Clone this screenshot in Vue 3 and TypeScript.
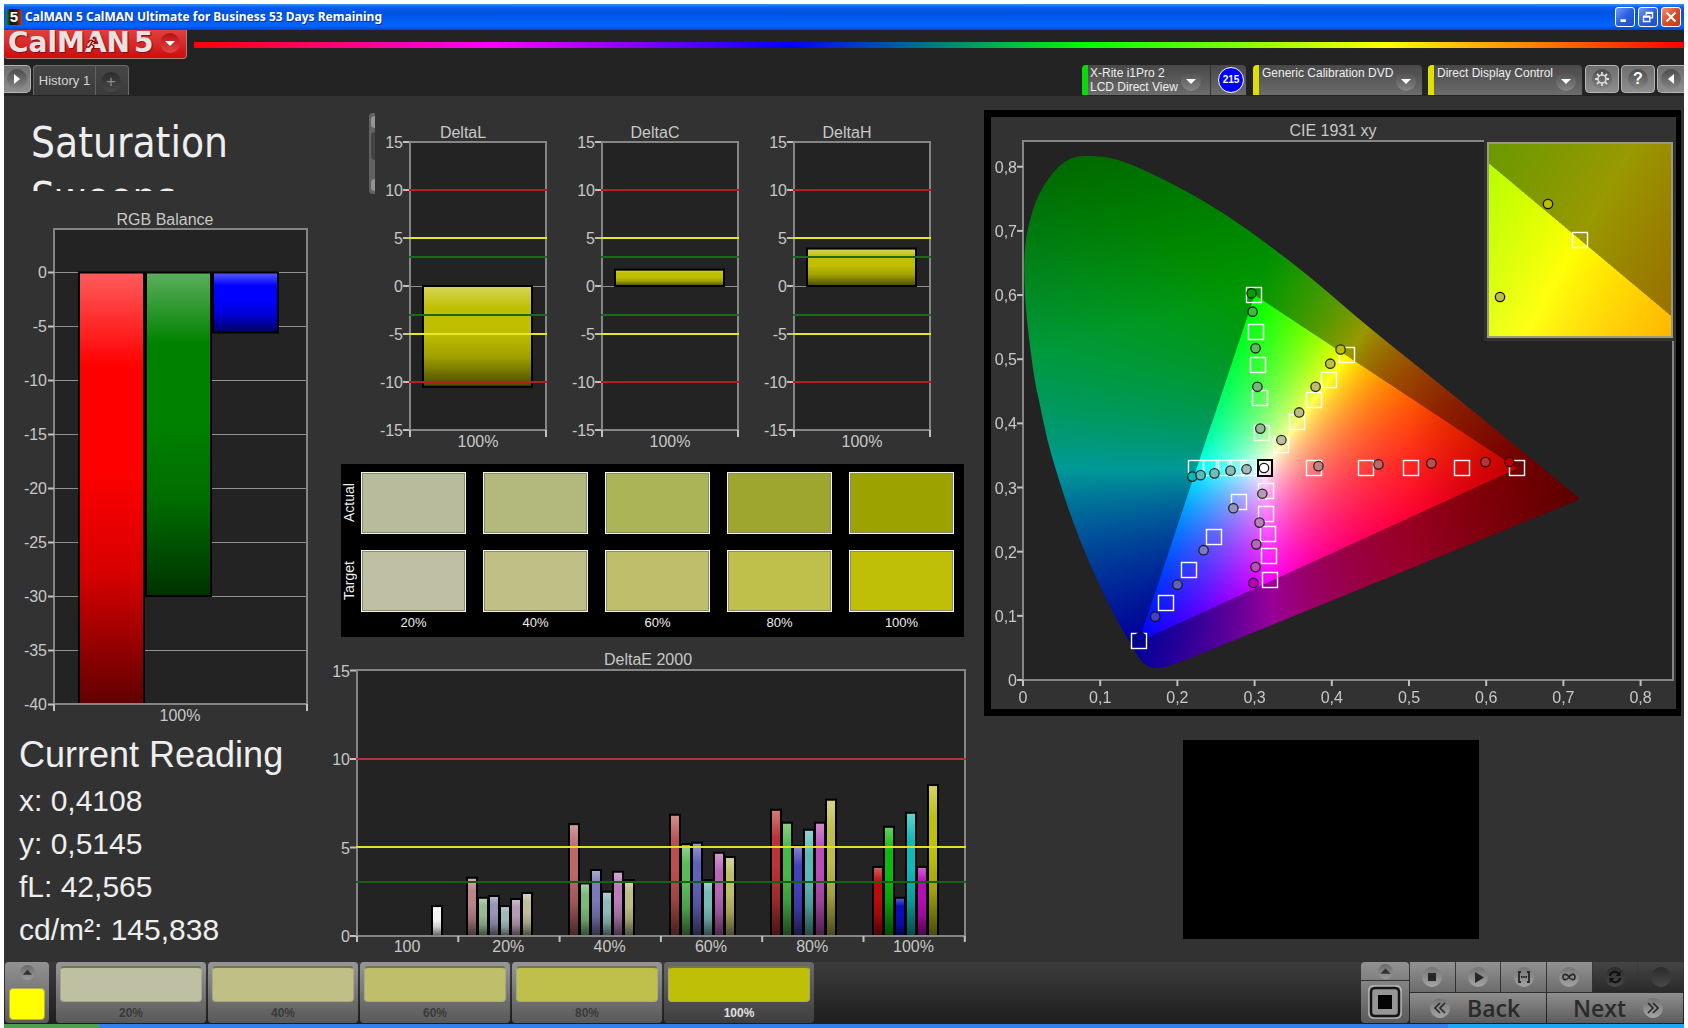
<script setup lang="ts">
import { onMounted, ref } from 'vue'

type Point = [number, number]
interface Bar { x: number; w: number; from: number; to: number; color: string }

/* ---------- RGB balance ---------- */
const rgbY = (v: number) => 67 - v * 10.8
const rgbTicks = [0, -5, -10, -15, -20, -25, -30, -35, -40]
const rgbBars: Bar[] = [
  { x: 75, w: 65, from: 0, to: -40, color: '#ff0000' },
  { x: 142, w: 65, from: 0, to: -30, color: '#008200' },
  { x: 209, w: 65, from: 0, to: -5.6, color: '#0000ff' },
]

/* ---------- Delta L / C / H ---------- */
const deltaY = (v: number) => 174 - v * 9.6
const deltaTicks = [15, 10, 5, 0, -5, -10, -15]
const deltaCharts = [
  { name: 'DeltaL', value: -10.5 },
  { name: 'DeltaC', value: 1.7 },
  { name: 'DeltaH', value: 3.9 },
]
const limits = [
  { v: 10, color: '#b42020' },
  { v: 5, color: '#e6e62a' },
  { v: 3, color: '#1c691c' },
  { v: -3, color: '#1c691c' },
  { v: -5, color: '#e6e62a' },
  { v: -10, color: '#b42020' },
]

/* ---------- Swatches ---------- */
const levels = ['20%', '40%', '60%', '80%', '100%']
const actual = ['#b8bb9c', '#b3b97c', '#abb558', '#9fa62e', '#9ca300']
const target = ['#bfbfa4', '#c0bf86', '#bfbf6b', '#bfbf4c', '#bfbf07']

/* ---------- DeltaE 2000 ---------- */
const eY = (v: number) => 286 - v * 17.7
const eTicks = [15, 10, 5, 0]
const eGroups: { label: string; values: number[]; colors: string[] }[] = [
  { label: '100', values: [0, 0, 0, 0, 0, 0, 1.69], colors: ['', '', '', '', '', '', '#f4f4f4'] },
  { label: '20%', values: [3.29, 2.16, 2.26, 1.69, 2.09, 2.43], colors: ['#b98686', '#96b996', '#9696b9', '#a0b9b9', '#b49bb4', '#bebe9c'] },
  { label: '40%', values: [6.32, 2.97, 3.73, 2.5, 3.63, 3.16], colors: ['#ba6868', '#7ab97a', '#7a7ab9', '#8cbaba', '#b97eb9', '#bebe84'] },
  { label: '60%', values: [6.85, 5.19, 5.27, 3.16, 4.7, 4.46], colors: ['#b95050', '#5cb95c', '#6060b9', '#78baba', '#b966b9', '#bebe69'] },
  { label: '80%', values: [7.13, 6.4, 5.08, 6, 6.4, 7.7], colors: ['#b93434', '#46b946', '#4242b9', '#5ababa', '#b94eb9', '#bebe4b'] },
  { label: '100%', values: [3.9, 6.17, 2.16, 6.96, 3.9, 8.53], colors: ['#b90c0c', '#0cb90c', '#0c0cb9', '#0cbaba', '#b90cb9', '#bebe0c'] },
]
const groupX = (i: number) => 27 + i * 101.3
const eBars: Bar[] = eGroups.flatMap((g, gi) =>
  g.values
    .map((v, i) => ({ x: Math.round(groupX(gi) + 9 + i * 11), w: 10, from: v, to: 0, color: g.colors[i] }))
    .filter((b) => b.from > 0),
)

/* ---------- CIE 1931 ---------- */
const PLOT_W = 650
const PLOT_H = 539
const cx = (x: number) => x * 772
const cy = (y: number) => PLOT_H - y * 641.6
const xTicks = [0, 0.1, 0.2, 0.3, 0.4, 0.5, 0.6, 0.7, 0.8]
const yTicks = xTicks
const comma = (v: number) => String(v).replace('.', ',')

const locus: Point[] = [
  [63, 15], [54, 15], [42, 20], [31, 30], [21, 44], [13, 59], [6, 82], [2, 102], [1, 126], [2, 159],
  [6, 199], [12, 242], [16, 259], [24, 299], [35, 336], [49, 379], [69, 429], [92, 476], [107, 502],
  [116, 517], [121, 523], [128, 527], [135, 527], [142, 526], [156, 522], [548, 362], [558, 358],
  [552, 354], [437, 259], [345, 186], [291, 139], [246, 104], [201, 72], [156, 46], [115, 26], [93, 18], [75, 15],
]

const targets: Point[] = [
  [0.299, 0.6], [0.302, 0.542], [0.3045, 0.491], [0.3074, 0.4395], [0.3097, 0.385],
  [0.42, 0.5066], [0.3964, 0.468], [0.377, 0.436], [0.3554, 0.4025], [0.3342, 0.3666],
  [0.6398, 0.331], [0.5687, 0.331], [0.5032, 0.331], [0.4439, 0.331], [0.377, 0.331],
  [0.224, 0.331], [0.2429, 0.331], [0.2598, 0.331], [0.2768, 0.331], [0.2932, 0.331],
  [0.15, 0.0606], [0.185, 0.1196], [0.2155, 0.1712], [0.247, 0.2227], [0.2796, 0.2775],
  [0.32, 0.1556], [0.3187, 0.1937], [0.3168, 0.2275], [0.3149, 0.258], [0.3149, 0.2946],
]
const readings: [number, number, string][] = [
  [0.296, 0.6027, '#00a000'], [0.2974, 0.574, '#41b941'], [0.3012, 0.517, '#5fb95f'], [0.3036, 0.457, '#78b978'], [0.3074, 0.3918, '#96b996'],
  [0.4114, 0.515, '#bebe00'], [0.398, 0.493, '#bebe4b'], [0.379, 0.457, '#bebe69'], [0.3577, 0.417, '#bebe84'], [0.3347, 0.374, '#bebe9c'],
  [0.63, 0.3397, '#b90000'], [0.599, 0.3397, '#b93434'], [0.529, 0.3376, '#b95050'], [0.4604, 0.336, '#ba6868'], [0.3827, 0.3333, '#b98686'],
  [0.2193, 0.317, '#00baba'], [0.23, 0.3193, '#5ababa'], [0.248, 0.322, '#78baba'], [0.2688, 0.3263, '#8cbaba'], [0.2895, 0.3285, '#a0b9b9'],
  [0.152, 0.067, '#0000b0'], [0.1713, 0.0987, '#4242b9'], [0.2, 0.1486, '#6060b9'], [0.2339, 0.2023, '#7a7ab9'], [0.2725, 0.2678, '#9696b9'],
  [0.2984, 0.1513, '#b900b9'], [0.3012, 0.176, '#b94eb9'], [0.3022, 0.2114, '#b966b9'], [0.3064, 0.2453, '#b97eb9'], [0.31, 0.2903, '#b49bb4'],
]

/** Display colour of a chromaticity; dimmed where it falls outside Rec. 709. */
function chroma(x: number, y: number): [number, number, number] {
  const Y = Math.max(y, 0.001)
  const X = x / Y
  const Z = (1 - x - Y) / Y
  const r = 3.2406 * X - 1.5372 - 0.4986 * Z
  const g = -0.9689 * X + 1.8758 + 0.0415 * Z
  const b = 0.0557 * X - 0.204 + 1.057 * Z
  const inside = r >= 0 && g >= 0 && b >= 0
  const green = Math.max(0, y - 0.6 + (0.3 - x) * 0.3) * 1.1
  const red = Math.max(0, x - 0.5) * 1.8
  const k = (255 * (inside ? 1 : 0.6) * (1 - green) * (1 - red)) / Math.max(r, g, b)
  return [Math.max(r, 0) * k, Math.max(g, 0) * k, Math.max(b, 0) * k]
}

function paint(canvas: HTMLCanvasElement, toXY: (px: number, py: number) => Point) {
  const ctx = canvas.getContext('2d')
  if (!ctx) return
  const image = ctx.createImageData(canvas.width, canvas.height)
  let p = 0
  for (let j = 0; j < canvas.height; j++) {
    for (let i = 0; i < canvas.width; i++) {
      const sum = [0, 0, 0]
      for (const [dx, dy] of [[0.25, 0.25], [0.75, 0.25], [0.25, 0.75], [0.75, 0.75]]) {
        const c = chroma(...toXY(i + dx, j + dy))
        sum[0] += c[0]
        sum[1] += c[1]
        sum[2] += c[2]
      }
      image.data[p++] = sum[0] / 4
      image.data[p++] = sum[1] / 4
      image.data[p++] = sum[2] / 4
      image.data[p++] = 255
    }
  }
  ctx.putImageData(image, 0, 0)
}

const gamut = ref<HTMLCanvasElement>()
const detail = ref<HTMLCanvasElement>()

onMounted(() => {
  if (gamut.value) {
    paint(gamut.value, (px, py) => [px / 772, (PLOT_H - py) / 641.6])
    const ctx = gamut.value.getContext('2d')
    if (ctx) {
      ctx.globalCompositeOperation = 'destination-in'
      ctx.beginPath()
      locus.forEach(([x, y], i) => {
        const [nx, ny] = locus[(i + 1) % locus.length]
        if (i === 0) ctx.moveTo((x + nx) / 2, (y + ny) / 2)
        else ctx.quadraticCurveTo(x, y, (x + nx) / 2, (y + ny) / 2)
      })
      ctx.closePath()
      ctx.fill()
    }
  }
  if (detail.value) {
    paint(detail.value, (px, py) => [0.4195 + (px - 92) / 3700, 0.5053 - (py - 96) / 3900])
  }
})

const currentReading = ['x: 0,4108', 'y: 0,5145', 'fL: 42,565', 'cd/m²: 145,838']
</script>

<template>
  <div class="app">
    <header>
      <div class="titlebar">
        <span class="app-icon">5</span>
        <h1>CalMAN 5 CalMAN Ultimate for Business 53 Days Remaining</h1>
        <button class="win" aria-label="Minimize"><svg viewBox="0 0 20 20"><path d="M5 14h6" stroke="#fff" stroke-width="3" /></svg></button>
        <button class="win" aria-label="Restore"><svg viewBox="0 0 20 20"><path d="M8 8V5h7v6h-3M8 6h7" stroke="#fff" stroke-width="1.5" fill="none" /><path d="M5 9h7v6H5zM5 10h7" stroke="#fff" stroke-width="1.5" fill="none" /></svg></button>
        <button class="win close" aria-label="Close"><svg viewBox="0 0 20 20"><path d="M5 5l10 10M15 5L5 15" stroke="#fff" stroke-width="2.2" /></svg></button>
      </div>

      <div class="brand-row">
        <button class="brand" aria-label="CalMAN 5 menu">
          <span class="brand-name">CalMAN</span><span class="brand-name">5</span>
          <svg class="runner" viewBox="0 0 12 14"><circle cx="8" cy="2" r="1.6" fill="#8c1010" /><path d="M7 4L5 8l3 2-1 4M5 8l-2 3H0M7 5l3 2 2-1M6 4L3 5 2 7" fill="none" stroke="#8c1010" stroke-width="1.4" /></svg>
          <span class="knob red"><svg viewBox="0 0 20 20"><path d="M5 8h10l-5 5z" fill="#fff" /></svg></span>
        </button>
        <div class="rainbow"></div>
      </div>

      <nav class="tabs">
        <button class="square first" aria-label="Expand"><span class="knob"><svg viewBox="0 0 20 20"><path d="M7 5v10l6-5z" fill="#fff" /></svg></span></button>
        <div class="history">
          <button class="tab">History 1</button>
          <button class="add" aria-label="Add history"><span class="knob dark">+</span></button>
        </div>
        <span class="spacer"></span>
        <div class="device meter">
          <button class="device-btn" aria-haspopup="menu"><span>X-Rite i1Pro 2<br>LCD Direct View</span><span class="knob"><svg viewBox="0 0 20 20"><path d="M5 8h10l-5 5z" fill="#fff" /></svg></span></button>
          <span class="count">215</span>
        </div>
        <div class="device source">
          <button class="device-btn" aria-haspopup="menu"><span>Generic Calibration DVD</span><span class="knob"><svg viewBox="0 0 20 20"><path d="M5 8h10l-5 5z" fill="#fff" /></svg></span></button>
        </div>
        <div class="device display">
          <button class="device-btn" aria-haspopup="menu"><span>Direct Display Control</span><span class="knob"><svg viewBox="0 0 20 20"><path d="M5 8h10l-5 5z" fill="#fff" /></svg></span></button>
        </div>
        <button class="square" aria-label="Settings"><span class="knob"><svg viewBox="0 0 20 20"><circle cx="10" cy="10" r="4" fill="none" stroke="#ddd" stroke-width="1.6" /><path d="M10 3v3M10 14v3M3 10h3M14 10h3M5 5l2 2M13 13l2 2M15 5l-2 2M7 13l-2 2" stroke="#ddd" stroke-width="1.8" /></svg></span></button>
        <button class="square" aria-label="Help"><span class="knob help">?</span></button>
        <button class="square last" aria-label="Collapse"><span class="knob"><svg viewBox="0 0 20 20"><path d="M13 5v10l-6-5z" fill="#fff" /></svg></span></button>
      </nav>
    </header>

    <main>
      <section class="left">
        <h2 class="page-title">Saturation Sweeps</h2>
        <svg class="chart" viewBox="0 0 326 520" role="img" aria-label="RGB Balance">
          <defs>
            <linearGradient id="shine" x1="0" y1="0" x2="0" y2="1">
              <stop offset="0" stop-color="#fff" stop-opacity=".36" />
              <stop offset=".22" stop-color="#fff" stop-opacity="0" />
              <stop offset=".45" stop-color="#000" stop-opacity="0" />
              <stop offset=".7" stop-color="#000" stop-opacity=".16" />
              <stop offset="1" stop-color="#000" stop-opacity=".62" />
            </linearGradient>
          </defs>
          <text class="t" x="161" y="20" text-anchor="middle">RGB Balance</text>
          <rect x="50" y="24" width="253" height="475" fill="#232323" />
          <line v-for="v in rgbTicks" :key="v" x1="44" x2="303" :y1="Math.round(rgbY(v)) + 0.5" :y2="Math.round(rgbY(v)) + 0.5" class="grid-line" />
          <g v-for="b in rgbBars" :key="b.x">
            <rect :x="b.x" :y="67.5" :width="b.w" :height="rgbY(b.to) - 67.5" :fill="b.color" />
            <rect :x="b.x" :y="67.5" :width="b.w" :height="rgbY(b.to) - 67.5" fill="url(#shine)" stroke="#000" stroke-width="2" />
          </g>
          <rect x="50" y="24" width="253" height="475" class="frame" />
          <path d="M50 499v7M303 499v7" class="tick" />
          <g v-for="v in rgbTicks" :key="'l' + v">
            <line x1="44" x2="50" :y1="rgbY(v) + 0.5" :y2="rgbY(v) + 0.5" class="tick" />
            <text class="t" x="43" :y="rgbY(v) + 6" text-anchor="end">{{ v }}</text>
          </g>
          <text class="t" x="176" y="516" text-anchor="middle">100%</text>
        </svg>
        <div class="reading">
          <h3>Current Reading</h3>
          <p v-for="line in currentReading" :key="line">{{ line }}</p>
        </div>
      </section>

      <section class="middle">
        <div class="deltas">
          <div class="scroll-stub"><i></i><b></b><i></i></div>
          <svg v-for="c in deltaCharts" :key="c.name" class="chart" viewBox="0 0 192 351" role="img" :aria-label="c.name">
            <text class="t" x="88" y="25" text-anchor="middle">{{ c.name }}</text>
            <rect x="35" y="29" width="136" height="288" fill="#232323" />
            <line x1="35" x2="171" y1="173.5" y2="173.5" class="grid-line" />
            <g transform="translate(-1 -1)">
              <rect x="49" :y="Math.min(deltaY(0), deltaY(c.value))" width="109" :height="Math.abs(c.value) * 9.6" fill="#bfbf00" />
              <rect x="49" :y="Math.min(deltaY(0), deltaY(c.value))" width="109" :height="Math.abs(c.value) * 9.6" fill="url(#shine)" stroke="#000" stroke-width="2" />
              <rect x="36" y="30" width="136" height="288" class="frame" />
              <line v-for="l in limits" :key="l.v" x1="35" x2="173" :y1="Math.round(deltaY(l.v))" :y2="Math.round(deltaY(l.v))" :stroke="l.color" stroke-width="2" />
              <path d="M36 318v7M172 318v7" class="tick" />
              <g v-for="v in deltaTicks" :key="'l' + v">
                <line x1="29" x2="35" :y1="deltaY(v)" :y2="deltaY(v)" class="tick" />
                <text class="t" x="29" :y="deltaY(v) + 6" text-anchor="end">{{ v }}</text>
              </g>
            </g>
            <text class="t" x="103" y="334" text-anchor="middle">100%</text>
          </svg>
        </div>

        <div class="swatches">
          <span class="side">Actual</span>
          <div class="cells">
            <div v-for="c in actual" :key="c" class="swatch" :style="{ background: c }"></div>
          </div>
          <span class="side">Target</span>
          <div class="cells">
            <div v-for="c in target" :key="c" class="swatch" :style="{ background: c }"></div>
          </div>
          <div class="cells labels">
            <span v-for="l in levels" :key="l">{{ l }}</span>
          </div>
        </div>

        <svg class="chart" viewBox="0 0 650 310" role="img" aria-label="DeltaE 2000">
          <text class="t" x="318" y="15" text-anchor="middle">DeltaE 2000</text>
          <rect x="27" y="20" width="608" height="266" fill="#232323" />
          <g v-for="(b, i) in eBars" :key="i">
            <rect :x="b.x" :y="eY(b.from)" :width="b.w" :height="286 - eY(b.from)" :fill="b.color" />
            <rect :x="b.x" :y="eY(b.from)" :width="b.w" :height="286 - eY(b.from)" fill="url(#shine)" stroke="#000" stroke-width="2" />
          </g>
          <rect x="27" y="20" width="608" height="266" class="frame" />
          <line x1="26" x2="636" y1="109" y2="109" stroke="#b83030" stroke-width="2" />
          <line x1="26" x2="636" y1="197" y2="197" stroke="#e2e21e" stroke-width="2" />
          <line x1="26" x2="636" y1="232" y2="232" stroke="#14640f" stroke-width="2" />
          <g v-for="v in eTicks" :key="v">
            <line x1="20" x2="26" :y1="eY(v)" :y2="eY(v)" class="tick" />
            <text class="t" x="20" :y="eY(v) + 6" text-anchor="end">{{ v }}</text>
          </g>
          <line v-for="i in 7" :key="'x' + i" :x1="groupX(i - 1)" :x2="groupX(i - 1)" y1="286" y2="292" class="tick" />
          <text v-for="(g, i) in eGroups" :key="'g' + g.label" class="t" :x="groupX(i) + 50" y="302" text-anchor="middle">{{ g.label }}</text>
        </svg>
      </section>

      <section class="right">
        <div class="cie">
          <svg class="chart" viewBox="0 0 685 592" role="img" aria-label="CIE 1931 xy">
            <text class="t" x="342" y="19" text-anchor="middle">CIE 1931 xy</text>
            <g transform="translate(32 24)">
              <rect x="0" y="0" :width="PLOT_W" :height="PLOT_H" fill="#232323" />
              <foreignObject x="0" y="0" :width="PLOT_W" :height="PLOT_H">
                <canvas ref="gamut" class="layer" :width="PLOT_W" :height="PLOT_H"></canvas>
              </foreignObject>
              <rect x="0" y="0" :width="PLOT_W" :height="PLOT_H" class="frame" />
              <g v-for="v in xTicks" :key="v">
                <line :x1="cx(v)" :x2="cx(v)" :y1="PLOT_H" :y2="PLOT_H + 6" class="tick" />
                <text class="t" :x="cx(v)" :y="PLOT_H + 23" text-anchor="middle">{{ comma(v) }}</text>
              </g>
              <g v-for="v in yTicks" :key="'y' + v">
                <line x1="-6" x2="0" :y1="cy(v)" :y2="cy(v)" class="tick" />
                <text class="t" x="-6" :y="cy(v) + 6" text-anchor="end">{{ comma(v) }}</text>
              </g>
              <rect v-for="(p, i) in targets" :key="'t' + i" :x="Math.round(cx(p[0])) - 7.5" :y="Math.round(cy(p[1])) - 7.5" width="15" height="15" fill="none" stroke="#fff" stroke-width="1.4" />
              <circle v-for="(p, i) in readings" :key="'r' + i" :cx="cx(p[0])" :cy="cy(p[1])" r="4.7" :fill="p[2]" stroke="#111" stroke-opacity=".85" stroke-width="1.3" />
              <rect x="235" y="319" width="14" height="16" fill="none" stroke="#000" stroke-width="2" />
              <circle cx="241" cy="327" r="4.7" fill="#fff" stroke="#111" stroke-width="1.3" />
              <rect x="461" y="-4" width="192" height="204" fill="#323232" />
              <foreignObject x="465" y="2" width="184" height="195">
                <canvas ref="detail" class="layer" width="184" height="195"></canvas>
              </foreignObject>
              <rect x="465" y="2" width="184" height="194" fill="none" stroke="#9b9b7c" stroke-width="2" />
              <circle cx="525" cy="63" r="4.7" fill="#bebe00" stroke="#111" stroke-width="1.3" />
              <circle cx="477" cy="156" r="4.7" fill="#bebe4b" stroke="#111" stroke-width="1.3" />
              <rect x="549.5" y="91.5" width="15" height="15" fill="none" stroke="#fff" stroke-width="1.4" />
            </g>
          </svg>
        </div>
        <div class="patch"></div>
      </section>
    </main>

    <footer>
      <button class="color-pick" aria-label="Pick color">
        <span class="knob small"><svg viewBox="0 0 20 20"><path d="M4 13h12l-6-7z" fill="#333" /></svg></span>
        <i></i>
      </button>
      <div class="steps">
        <button v-for="(l, i) in levels" :key="l" class="step" :class="{ active: i === 4 }">
          <i :style="{ background: target[i] }"></i>{{ l }}
        </button>
      </div>
      <span class="spacer"></span>
      <div class="window-pick">
        <button aria-label="Show list"><span class="knob small"><svg viewBox="0 0 20 20"><path d="M3 13h14l-7-7z" fill="#333" /></svg></span></button>
        <button class="window-btn" aria-label="Pattern window"><svg viewBox="0 0 34 34"><rect x="1" y="1" width="32" height="32" rx="4" fill="none" stroke="#bdbdbd" stroke-width="1.5" /><rect x="3" y="3" width="28" height="28" rx="4" fill="#969696" stroke="#151515" stroke-width="2.5" /><rect x="10" y="10" width="14" height="14" fill="#050505" /></svg></button>
      </div>
      <div class="transport">
        <button aria-label="Stop"><span class="knob light"><svg viewBox="0 0 20 20"><rect x="6" y="6" width="8" height="8" fill="#262626" /></svg></span></button>
        <button aria-label="Play"><span class="knob light"><svg viewBox="0 0 20 20"><path d="M7 5v11l9-5.500z" fill="#262626" /></svg></span></button>
        <button aria-label="Read series"><span class="knob light"><svg viewBox="0 0 20 20"><path d="M7 5H5v10h2M13 5h2v10h-2" fill="none" stroke="#262626" stroke-width="1.800" /><path d="M7 10h6" stroke="#262626" stroke-width="1.800" stroke-dasharray="1.600 .6" /></svg></span></button>
        <button aria-label="Read continuously"><span class="knob light"><svg viewBox="0 0 20 20"><path d="M10 10C8.500 7 4 6 4 10s4.500 3 6 0c1.500-3 6-4 6 0s-4.500 3-6 0z" fill="none" stroke="#262626" stroke-width="1.600" /></svg></span></button>
        <button class="off" aria-label="Refresh"><span class="knob dark"><svg viewBox="0 0 20 20"><path d="M5 9c0-4 6-6 9-2M15 11c0 4-6 6-9 2" fill="none" stroke="#111" stroke-width="2" /><path d="M15.500 4v5h-5zM4.500 16v-5h5z" fill="#111" /></svg></span></button>
        <button class="off" aria-label="Record"><span class="knob dark"></span></button>
        <button class="wide back"><span class="knob light"><svg viewBox="0 0 20 20"><path d="M10 5l-5 5 5 5M15 5l-5 5 5 5" fill="none" stroke="#262626" stroke-width="1.600" /></svg></span><span>Back</span></button>
        <button class="wide next"><span>Next</span><span class="knob light"><svg viewBox="0 0 20 20"><path d="M5 5l5 5-5 5M10 5l5 5-5 5" fill="none" stroke="#262626" stroke-width="1.600" /></svg></span></button>
      </div>
    </footer>
    <div class="taskbar"><i></i><b></b></div>
  </div>
</template>

<style>
body {
  margin: 0;
  background: #fff;
}
</style>

<style scoped>
* {
  box-sizing: border-box;
}
.app {
  display: flex;
  flex-direction: column;
  min-height: 100vh;
  border: solid #fff;
  border-width: 4px 4px 0;
  background: #323232;
  color: #c8c8c8;
  font-family: "Liberation Sans", Arial, sans-serif;
  overflow: hidden;
}
button {
  margin: 0;
  padding: 0;
  border: 0;
  background: none;
  color: inherit;
  font: inherit;
}
svg {
  display: block;
}
h1, h2, h3, p {
  margin: 0;
  font-weight: 400;
}
.spacer {
  flex: 1;
}

/* header */
header {
  background: #232323;
}
.titlebar {
  display: flex;
  align-items: center;
  gap: 3px;
  height: 26px;
  padding: 0 3px 0 2px;
  background: linear-gradient(#3a95ff 0, #0a5ff0 3px, #0054e0 8px, #005cf4 16px, #0066ff 22px, #0044c8 26px);
}
.app-icon {
  width: 16px;
  height: 16px;
  background: linear-gradient(90deg, #2a8a3a, #111 30%, #222 65%, #c03a1a);
  color: #fff;
  font: bold 15px/16px "Liberation Sans", sans-serif;
  text-align: center;
}
h1 {
  flex: 1;
  color: #fff;
  font: bold 12px/20px "Noto Sans", sans-serif;
  text-shadow: 1px 1px 0 #10308a;
}
.win {
  width: 20px;
  height: 20px;
  border: 1px solid #fff;
  border-radius: 3px;
  background: linear-gradient(135deg, #6f9bf5, #2a5fe0 50%, #1b4ed0);
}
.close {
  background: linear-gradient(135deg, #f09478, #dc4a28 50%, #c23a14);
}
.brand-row {
  display: flex;
  align-items: flex-start;
  gap: 7px;
  height: 35px;
}
.brand {
  position: relative;
  display: flex;
  align-items: center;
  gap: 4px;
  width: 183px;
  height: 29px;
  padding: 0 6px 2px 4px;
  border: solid #a08080;
  border-width: 0 1px 1px 0;
  border-radius: 0 0 4px 4px;
  background: linear-gradient(#e04040, #d82828 50%, #cc0c0c);
  overflow: hidden;
}
.brand-name {
  color: #e6e2e2;
  font: bold 28px/26px "DejaVu Sans", sans-serif;
  text-shadow: 1px 1px 1px #7a1010;
}
.runner {
  position: absolute;
  left: 82px;
  top: 6px;
  width: 12px;
  height: 14px;
}
.knob {
  display: flex;
  align-items: center;
  justify-content: center;
  flex: none;
  width: 20px;
  height: 20px;
  border-radius: 50%;
  background: linear-gradient(#4c4c4c, #858585);
  color: #fff;
}
.knob svg {
  width: 20px;
  height: 20px;
}
.knob.red {
  margin-left: auto;
  background: linear-gradient(#b81010, #e04848);
}
.knob.dark {
  background: linear-gradient(#2c2c2c, #484848);
  color: #8c8c8c;
  font-size: 17px;
}
.knob.light {
  background: linear-gradient(#747474, #a4a4a4);
}
.knob.small,
.knob.small svg {
  width: 15px;
  height: 15px;
}
.knob.small {
  background: linear-gradient(#6a6a6a, #9a9a9a);
}
.knob.help {
  font: bold 16px/20px "Liberation Sans", sans-serif;
}
.rainbow {
  flex: 1;
  height: 6px;
  margin-top: 12px;
  background: linear-gradient(90deg, #f00, #f0f 20%, #00f 40%, #0f0 60%, #ff0 80%, #f00);
}
.tabs {
  display: flex;
  align-items: flex-start;
  height: 31px;
  font-size: 12px;
}
.square {
  display: flex;
  align-items: center;
  justify-content: center;
  width: 34px;
  height: 28px;
  margin-left: 2px;
  border: 1px solid #b4b4b4;
  border-radius: 4px;
  background: linear-gradient(#6e6e6e, #8e8e8e);
}
.square.first {
  width: 27px;
  margin: 0 2px 0 0;
  border-left: 0;
  border-radius: 0 5px 5px 0;
}
.square.last {
  width: 27px;
  border-right: 0;
  border-radius: 5px 0 0 5px;
}
.history {
  display: flex;
  height: 30px;
  border: 1px solid #6a6a6a;
  border-bottom: 0;
  border-radius: 4px 4px 0 0;
  background: linear-gradient(#474747, #3a3a3a);
}
.tab {
  width: 62px;
  border-right: 1px solid #646464;
  color: #d4d4d4;
  font-size: 13px;
}
.add {
  display: flex;
  align-items: center;
  padding: 2px 7px 0 5px;
}
.device {
  display: flex;
  height: 30px;
  border-left: 6px solid #e0e000;
  border-radius: 4px 4px 0 0;
  background: linear-gradient(#484848, #6c6c6c);
}
.device-btn {
  display: flex;
  flex: 1;
  justify-content: space-between;
  padding: 1px 6px 0 3px;
  color: #eee;
  line-height: 14px;
  text-align: left;
}
.device-btn .knob {
  margin-top: 5px;
}
.meter {
  width: 164px;
  margin-right: 7px;
  border-left-color: #0ad80a;
}
.meter .device-btn {
  padding: 1px 9px 0 2px;
  border-right: 1px solid #333;
}
.source {
  width: 169px;
  margin-right: 6px;
}
.display {
  width: 154px;
  margin-right: 1px;
}
.count {
  width: 26px;
  height: 26px;
  margin: 2px 2px 0 7px;
  border: 1px solid #fff;
  border-radius: 50%;
  background: #00f;
  color: #fff;
  font: bold 10px/24px "Liberation Sans", sans-serif;
  text-align: center;
}

/* content */
main {
  display: grid;
  flex: 1;
  grid-template-columns: 326fr 650fr 704fr;
  align-items: start;
}
main section {
  min-width: 0;
}
.chart {
  width: 100%;
  height: auto;
  overflow: visible;
}
.t {
  fill: #c8c8c8;
  font-size: 16px;
}
.frame {
  fill: none;
  stroke: #858585;
  stroke-width: 2;
}
.grid-line {
  stroke: #909090;
  stroke-width: 1;
}
.tick {
  fill: none;
  stroke: #c0c0c0;
  stroke-width: 2;
}
.layer {
  display: block;
}
.page-title {
  height: 76px;
  margin: 19px 8px 14px 27px;
  color: #eee;
  font: 42px/55px "DejaVu Sans Condensed", "Noto Sans", sans-serif;
  overflow: hidden;
}
.reading {
  padding: 6px 0 0 15px;
  color: #eee;
}
.reading h3 {
  font-size: 36px;
  line-height: 48px;
}
.reading p {
  font-size: 30px;
  line-height: 43px;
}
.deltas {
  display: flex;
  align-items: flex-start;
  padding: 17px 29px 0 39px;
}
.deltas .chart {
  flex: 1;
  min-width: 0;
}
.scroll-stub {
  display: flex;
  flex: none;
  flex-direction: column;
  justify-content: space-between;
  width: 6px;
  height: 81px;
  padding: 3px 0 3px 2px;
  border-radius: 4px 0 0 4px;
  background: #626262;
}
.scroll-stub i {
  height: 12px;
  border-radius: 6px 0 0 6px;
  background: #959595;
}
.scroll-stub b {
  height: 28px;
  margin-bottom: 16px;
  border-radius: 6px 0 0 6px;
  background: #444;
}
.swatches {
  display: grid;
  grid-template-columns: 16px 1fr;
  row-gap: 16px;
  column-gap: 4px;
  margin: 0 16px 13px 11px;
  padding: 8px 10px 5px 0;
  background: #000;
  color: #eee;
}
.cells {
  display: grid;
  grid-template-columns: repeat(5, 1fr);
  gap: 17px;
}
.labels {
  grid-column: 2;
  margin-top: -14px;
  font-size: 13px;
  line-height: 18px;
  text-align: center;
}
.swatch {
  height: 62px;
  border: 1px solid #f4f4e4;
  box-shadow: inset 0 0 0 1px #8c8c6a;
}
.side {
  font-size: 14px;
  line-height: 16px;
  text-align: center;
  writing-mode: vertical-rl;
  transform: rotate(180deg);
}
.cie {
  margin: 14px 3px 24px 4px;
  border: solid #000;
  border-width: 7px 5px 7px 7px;
  background: #323232;
}
.patch {
  width: 42%;
  height: 199px;
  margin-left: 203px;
  background: #000;
}

/* footer */
footer {
  display: flex;
  height: 62px;
  padding: 0 1px;
  background: linear-gradient(#3c3c3c, #1e1e1e);
}
.color-pick {
  display: flex;
  flex-direction: column;
  align-items: center;
  width: 44px;
  height: 61px;
  margin-right: 7px;
  padding-top: 3px;
  border-radius: 4px;
  background: linear-gradient(#929292, #5c5c5c);
}
.color-pick i {
  width: 36px;
  height: 32px;
  margin-top: 8px;
  border: 1px solid #b0b050;
  border-radius: 4px;
  background: #ff0;
}
.steps {
  display: flex;
  gap: 2px;
}
.step {
  display: flex;
  flex-direction: column;
  align-items: center;
  width: 150px;
  height: 61px;
  padding: 4px 4px 0;
  border-radius: 4px;
  background: linear-gradient(#979797, #585858);
  color: #3a3a3a;
  font: bold 12px/20px "Liberation Sans", sans-serif;
}
.step i {
  width: 100%;
  height: 38px;
  margin-bottom: 1px;
  border: 1px solid #a8a880;
  border-top: 2px solid #77774c;
  border-radius: 4px;
}
.step.active {
  background: linear-gradient(#6a6a6a, #3e3e3e);
  color: #e0e0e0;
}
.window-pick {
  display: grid;
  grid-template-rows: 18px 42px;
  gap: 1px;
  width: 48px;
  margin-right: 1px;
}
.window-pick button {
  display: flex;
  align-items: center;
  justify-content: center;
  border-radius: 4px 4px 0 0;
  background: linear-gradient(#929292, #808080);
}
.window-pick .window-btn {
  border-radius: 0 0 4px 4px;
  background: linear-gradient(#848484, #5a5a5a);
}
.window-btn svg {
  width: 34px;
  height: 34px;
}
.transport {
  display: grid;
  grid-template-columns: repeat(6, 1fr);
  grid-template-rows: 30px 30px;
  gap: 1px;
  width: 273px;
}
.transport button {
  display: flex;
  align-items: center;
  justify-content: center;
  background: linear-gradient(#929292, #6c6c6c);
}
.transport .off {
  background: linear-gradient(#454545, #2a2a2a);
}
.transport .wide {
  grid-column: span 3;
  gap: 17px;
  padding: 0 20px;
  background: linear-gradient(#8e8e8e, #5c5c5c);
  color: #2a2a2a;
  font: 600 23px/30px "Open Sans", sans-serif;
}
.transport .back {
  justify-content: flex-start;
}
.transport .next {
  justify-content: flex-end;
}
.taskbar {
  display: flex;
  justify-content: space-between;
  height: 4px;
  background: #3280ec;
}
.taskbar i {
  width: 96px;
  border-radius: 0 4px 0 0;
  background: #4ea04e;
}
.taskbar b {
  width: 236px;
  background: #1ca6f4;
}
</style>
